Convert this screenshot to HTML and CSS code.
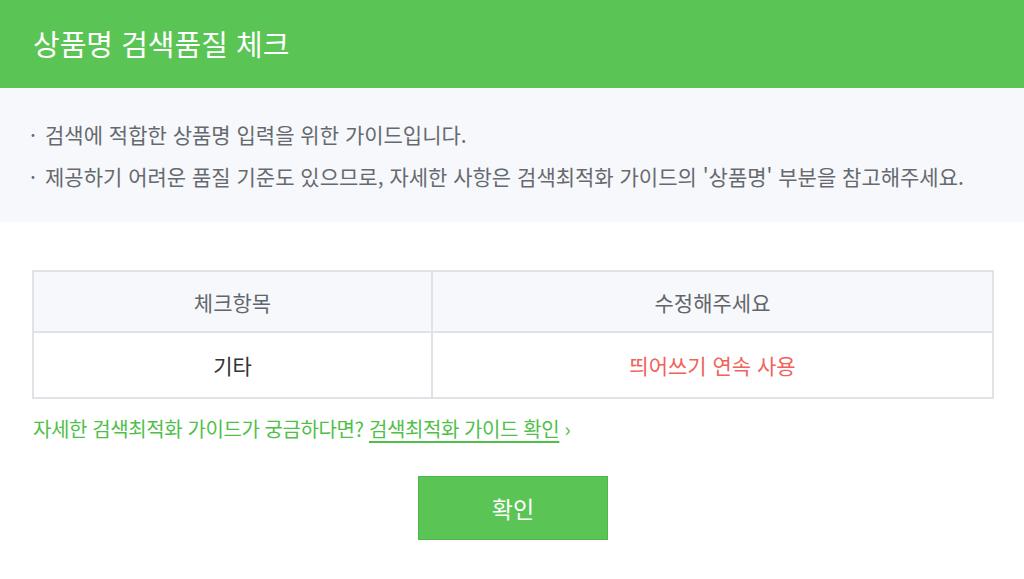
FILE: index.html
```html
<!DOCTYPE html>
<html lang="ko">
<head>
    <meta charset="UTF-8">
    <meta name="viewport" content="width=device-width, initial-scale=1.0">
    <link rel="stylesheet" href="styles.css">
    <title>상품명 검색품질 체크</title>
</head>

<body>
    <div class="popup">
        <div class="popup-header">
            <h1>상품명 검색품질 체크</h1>
        </div>

        <div class="guide">
            <ul>
                <li>검색에 적합한 상품명 입력을 위한 가이드입니다.</li>
                <li>제공하기 어려운 품질 기준도 있으므로, 자세한 사항은 검색최적화 가이드의 '상품명' 부분을 참고해주세요.</li>
            </ul>
        </div>

        <div class="content">
            <table class="check-table">
                <thead>
                    <tr>
                        <th class="col-item">체크항목</th>
                        <th>수정해주세요</th>
                    </tr>
                </thead>
                <tbody>
                    <tr>
                        <td>기타</td>
                        <td class="warn">띄어쓰기 연속 사용</td>
                    </tr>
                </tbody>
            </table>

            <p class="more">자세한 검색최적화 가이드가 궁금하다면? <a href="#">검색최적화 가이드 확인</a> <span class="arrow">›</span></p>

            <div class="actions">
                <button type="button" class="btn-ok">확인</button>
            </div>
        </div>
    </div>
</body>

</html>
```

FILE: styles.css
```css
body {
    margin: 0;
    padding: 0;
    background-color: #ffffff;
    font-family: "Noto Sans CJK KR", "Noto Sans", sans-serif;
}

.popup {
    width: 1024px;
}

.popup-header {
    height: 88px;
    background-color: #5ac454;
    display: flex;
    align-items: center;
    padding: 0 33px;
    box-sizing: border-box;
}

.popup-header h1 {
    margin: 0;
    margin-top: -3px;
    color: #ffffff;
    font-size: 29px;
    font-weight: 400;
}

.guide {
    height: 134px;
    background-color: #f7f8fb;
    padding: 25px 30px 0;
    box-sizing: border-box;
}

.guide ul {
    list-style: none;
    margin: 0;
    padding: 0;
}

.guide li {
    position: relative;
    padding-left: 15px;
    color: #666a70;
    font-size: 21px;
    line-height: 42px;
}

.guide li::before {
    content: "·";
    position: absolute;
    left: 0;
    top: 0;
    color: #666a70;
}

.content {
    padding: 48px 31px 0 32px;
}

.check-table {
    width: 962px;
    border-collapse: collapse;
    table-layout: fixed;
    font-size: 21px;
}

.check-table th,
.check-table td {
    border: 2px solid #e1e2e7;
    text-align: center;
    padding: 0;
}

.check-table th {
    height: 59px;
    background-color: #f7f8fb;
    color: #62666c;
    font-weight: 400;
}

.check-table td {
    height: 64px;
    color: #333333;
}

.col-item {
    width: 397px;
}

.check-table td.warn {
    color: #f0625c;
}

.more {
    margin: 16px 0 0 1px;
    color: #4fbf4a;
    font-size: 20px;
    line-height: 28px;
    letter-spacing: -0.4px;
}

.more a {
    color: #4fbf4a;
    text-decoration: underline;
    text-underline-offset: 4px;
}

.actions {
    display: flex;
    justify-content: center;
    margin-top: 33px;
}

.btn-ok {
    width: 190px;
    height: 64px;
    margin-left: 1px;
    background-color: #5ac454;
    border: 1px solid #4db847;
    color: #ffffff;
    font-family: "Noto Sans CJK KR", "Noto Sans", sans-serif;
    font-size: 23px;
    cursor: pointer;
}
```
